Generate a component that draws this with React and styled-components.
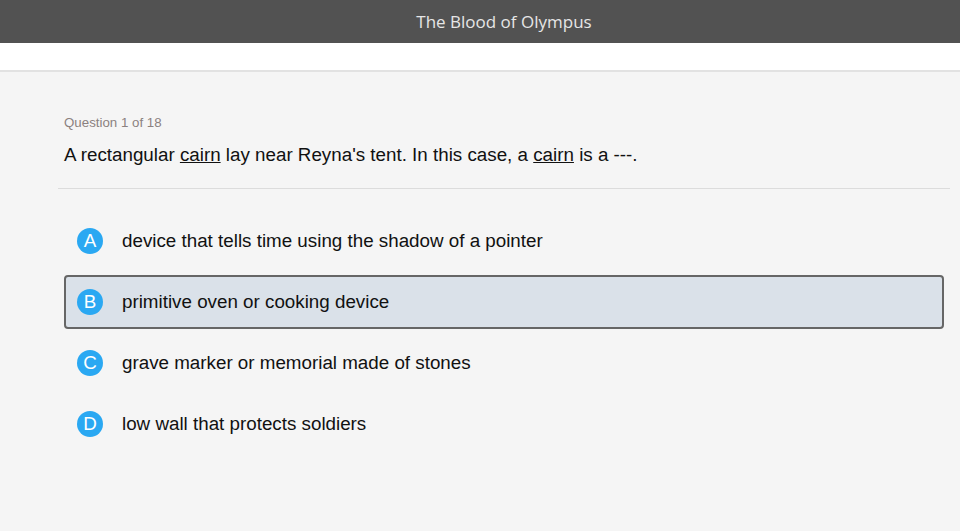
import React, { useState } from "react";
import styled, { createGlobalStyle } from "styled-components";

const options = [
  { key: "A", text: "device that tells time using the shadow of a pointer" },
  { key: "B", text: "primitive oven or cooking device" },
  { key: "C", text: "grave marker or memorial made of stones" },
  { key: "D", text: "low wall that protects soldiers" },
];

export default function App() {
  const [selected, setSelected] = useState("B");

  return (
    <>
      <GlobalStyle />
      <Header>
        <Title>The Blood of Olympus</Title>
      </Header>
      <Band />
      <Main>
        <Counter>Question 1 of 18</Counter>
        <Question>
          A rectangular <U>cairn</U> lay near Reyna's tent. In this case, a{" "}
          <U>cairn</U> is a ---.
        </Question>
        <Divider />
        <OptionList>
          {options.map((o) => (
            <Option
              key={o.key}
              $active={selected === o.key}
              onClick={() => setSelected(o.key)}
            >
              <Badge>{o.key}</Badge>
              <OptionText>{o.text}</OptionText>
            </Option>
          ))}
        </OptionList>
      </Main>
    </>
  );
}

const GlobalStyle = createGlobalStyle`
  html, body {
    margin: 0;
    padding: 0;
    background: #f5f5f5;
    font-family: "Liberation Sans", Arial, sans-serif;
  }
`;

const Header = styled.div`
  display: flex;
  justify-content: center;
  align-items: center;
  height: 43px;
  background: #525252;
  padding-left: 48px;
`;

const Title = styled.div`
  font-family: "Open Sans", sans-serif;
  font-size: 17px;
  color: #e6e6e6;
`;

const Band = styled.div`
  height: 27px;
  background: #fff;
  border-bottom: 2px solid #e2e2e2;
`;

const Main = styled.div`
  padding: 43px 16px 0 58px;
`;

const Counter = styled.div`
  font-size: 13.3px;
  color: #8b817f;
  padding-left: 6px;
  line-height: 15px;
`;

const Question = styled.div`
  margin-top: 14px;
  font-size: 18.8px;
  line-height: 22px;
  color: #111;
  padding-left: 6px;
`;

const U = styled.span`
  text-decoration: underline;
`;

const Divider = styled.div`
  margin-top: 22px;
  height: 1px;
  background: #dcdcdc;
  margin-right: -6px;
`;

const OptionList = styled.div`
  display: flex;
  flex-direction: column;
  gap: 7px;
  margin-top: 25px;
  padding-left: 6px;
`;

const Option = styled.div`
  display: flex;
  align-items: center;
  height: 50px;
  padding-left: 11px;
  border: 2px solid ${({ $active }) => ($active ? "#666" : "transparent")};
  border-radius: 4px;
  background: ${({ $active }) => ($active ? "#dae1e9" : "transparent")};
  cursor: pointer;
`;

const Badge = styled.div`
  width: 26px;
  height: 26px;
  border-radius: 50%;
  background: #2aa8f2;
  color: #fff;
  font-size: 18.8px;
  display: flex;
  justify-content: center;
  align-items: center;
  flex-shrink: 0;
`;

const OptionText = styled.div`
  margin-left: 19px;
  font-size: 18.8px;
  color: #111;
`;
